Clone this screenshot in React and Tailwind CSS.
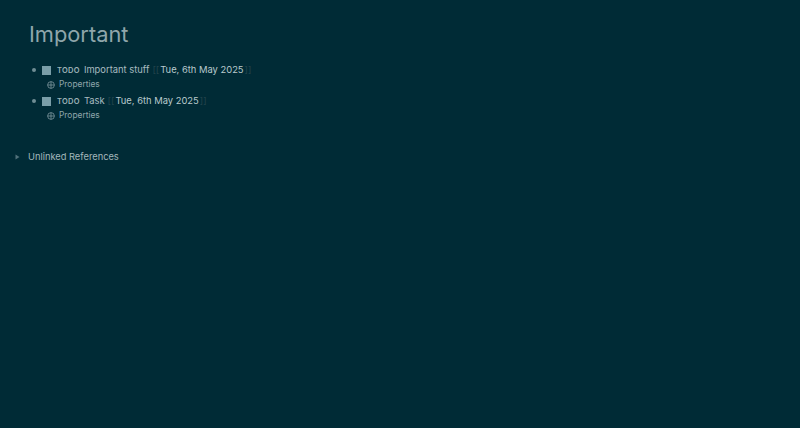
import React from 'react';

const Block = ({ title }) => (
  <div className="flex flex-col">
    <div className="flex items-center h-[16px]">
      <span className="w-[4px] h-[4px] rounded-full bg-[#6f8d94] ml-[32px] mr-[6px]"></span>
      <span className="w-[9px] h-[9px] bg-[#7a9ea8] mr-[6px]"></span>
      <span className="text-[7.5px] font-semibold tracking-[0.3px] text-[#9eb3b8] mr-[4px] pt-[2px]">TODO</span>
      <span className="text-[9.4px] text-[#a9bcc0]">{title}</span>
      <span className="text-[9.4px] text-[#23444d] ml-[3px] mr-[1px]">[[</span>
      <span className="text-[9.4px] text-[#b9cacd]">Tue, 6th May 2025</span>
      <span className="text-[9.4px] text-[#23444d] ml-[1px]">]]</span>
    </div>
    <div className="flex items-center h-[13px] ml-[47px]">
      <svg width="8" height="8" viewBox="0 0 10 10" className="mr-[4px]">
        <circle cx="5" cy="5" r="4.2" fill="none" stroke="#8aa2a8" strokeWidth="0.9" />
        <path d="M5 0.8V9.2M0.8 5H9.2" stroke="#8aa2a8" strokeWidth="0.9" />
      </svg>
      <span className="text-[8.4px] text-[#8fa6ab]">Properties</span>
    </div>
  </div>
);

export default function App() {
  return (
    <div
      className="w-[800px] h-[428px] bg-[#002b36] overflow-hidden"
      style={{ fontFamily: 'Inter, "Noto Sans", sans-serif' }}
    >
      <div className="pt-[19px] pl-[29px]">
        <h1 className="text-[21.8px] leading-[30px] text-[#8fa6ab] font-normal">Important</h1>
      </div>
      <div className="flex flex-col gap-[2px] mt-[13px]">
        <Block title="Important stuff" />
        <Block title="Task" />
      </div>
      <div className="flex items-center mt-[27px] h-[16px]">
        <svg width="5" height="6" viewBox="0 0 5 6" className="ml-[15px] mr-[8px]">
          <path d="M0.5 0.5L4.5 3L0.5 5.5Z" fill="#50717a" />
        </svg>
        <span className="text-[9.3px] text-[#a3b7bb]">Unlinked References</span>
      </div>
    </div>
  );
}
